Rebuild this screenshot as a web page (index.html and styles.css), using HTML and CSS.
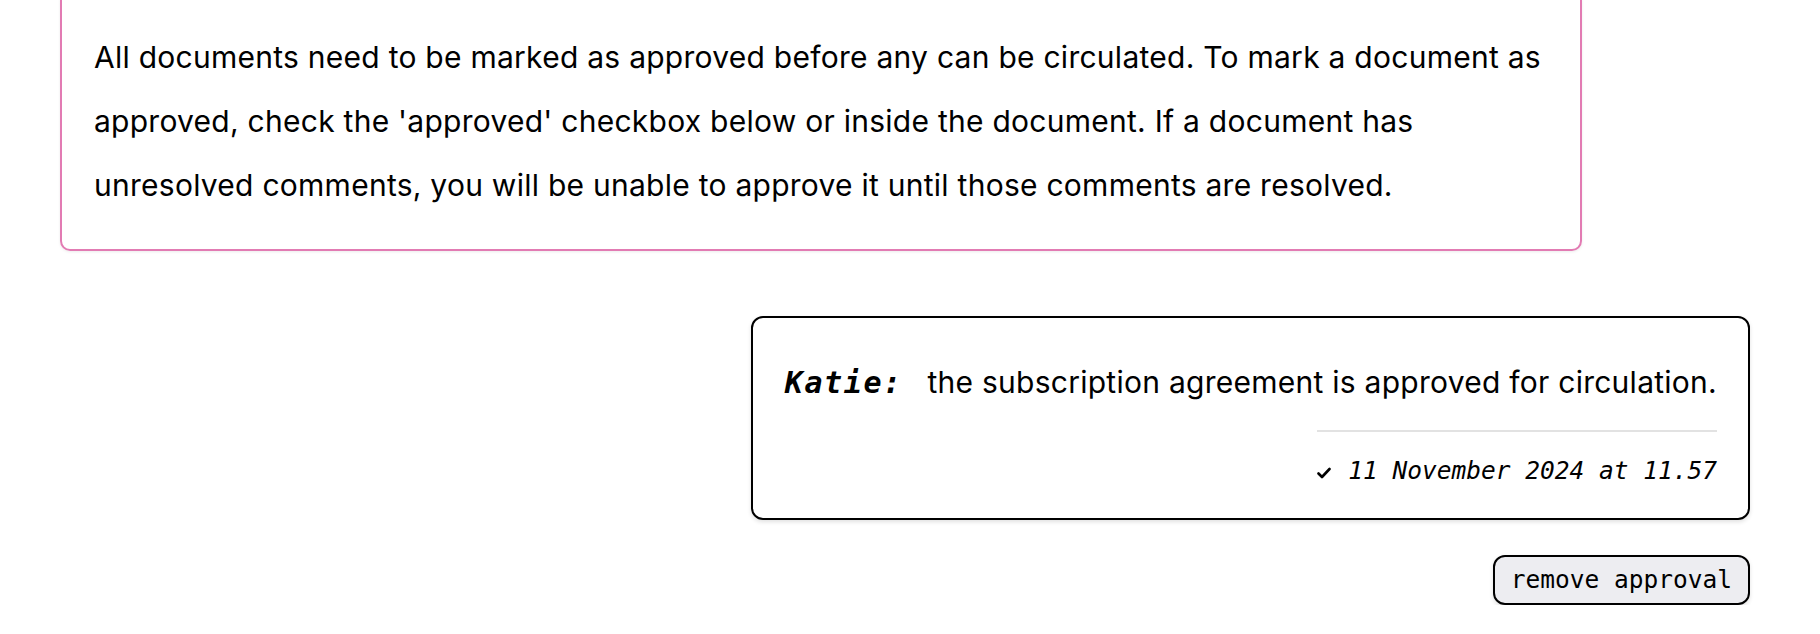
FILE: index.html
```html
<!DOCTYPE html>
<html lang="en">
<head>
    <meta charset="UTF-8">
    <meta name="viewport" content="width=device-width, initial-scale=1.0">
    <title>Approvals</title>
    <link rel="stylesheet" href="styles.css">
</head>
<body>
    <div class="thread">
        <div class="notice">
            <p>All documents need to be marked as approved before any can be circulated. To mark a document as approved, check the 'approved' checkbox below or inside the document. If a document has unresolved comments, you will be unable to approve it until those comments are resolved.</p>
        </div>

        <div class="message">
            <p class="message-body"><span class="author">Katie:</span> the subscription agreement is approved for circulation.</p>
            <div class="message-meta">
                <svg class="tick" width="14" height="12" viewBox="0 0 14 12"><polyline points="1.5,6.5 5,10 12.5,2" fill="none" stroke="#000" stroke-width="2.6" stroke-linecap="round" stroke-linejoin="round"/></svg>
                11 November 2024 at 11.57
            </div>
        </div>

        <div class="actions">
            <button class="btn">remove approval</button>
        </div>
    </div>
</body>
</html>
```

FILE: styles.css
```css
body {
    margin: 0;
    font-family: Inter, "Liberation Sans", sans-serif;
    color: #000;
    background: #fff;
}
.thread {
    padding: 0 70px 0 60px;
}
.notice {
    margin-top: -9px;
    width: 1522px;
    box-sizing: border-box;
    border: 2px solid #e27bb3;
    border-radius: 10px;
    padding: 32px 32px;
    box-shadow: 0 1px 3px rgba(0,0,0,0.08);
}
.notice p {
    margin: 0;
    font-size: 30px;
    letter-spacing: 0.26px;
    line-height: 64px;
}
.message {
    margin: 65px 0 0 auto;
    width: 999px;
    box-sizing: border-box;
    border: 2px solid #000;
    border-radius: 12px;
    padding: 42px 31px 30px 20px;
    box-shadow: 0 2px 4px rgba(0,0,0,0.12);
}
.message-body {
    margin: 0;
    text-align: right;
    white-space: nowrap;
    font-size: 30px;
    letter-spacing: 0.26px;
    line-height: 44px;
}
.author {
    font-family: "DejaVu Sans Mono", monospace;
    font-weight: bold;
    font-style: italic;
    letter-spacing: 1.6px;
    margin-right: 16px;
}
.message-meta {
    margin-left: auto;
    margin-top: 25px;
    width: 400px;
    border-top: 2px solid #e2e2e2;
    padding-top: 22px;
    text-align: right;
    font-family: "DejaVu Sans Mono", monospace;
    font-style: italic;
    font-size: 24.5px;
    line-height: 34px;
}
.tick {
    margin-right: 2px;
}
.actions {
    display: flex;
    justify-content: flex-end;
    margin-top: 35px;
}
.btn {
    font-family: "DejaVu Sans Mono", monospace;
    font-size: 24.5px;
    line-height: 26px;
    background: #ededf1;
    color: #000;
    border: 2px solid #000;
    border-radius: 12px;
    padding: 10px 16px;
    box-shadow: 0 2px 4px rgba(0,0,0,0.12);
    cursor: pointer;
}
```
